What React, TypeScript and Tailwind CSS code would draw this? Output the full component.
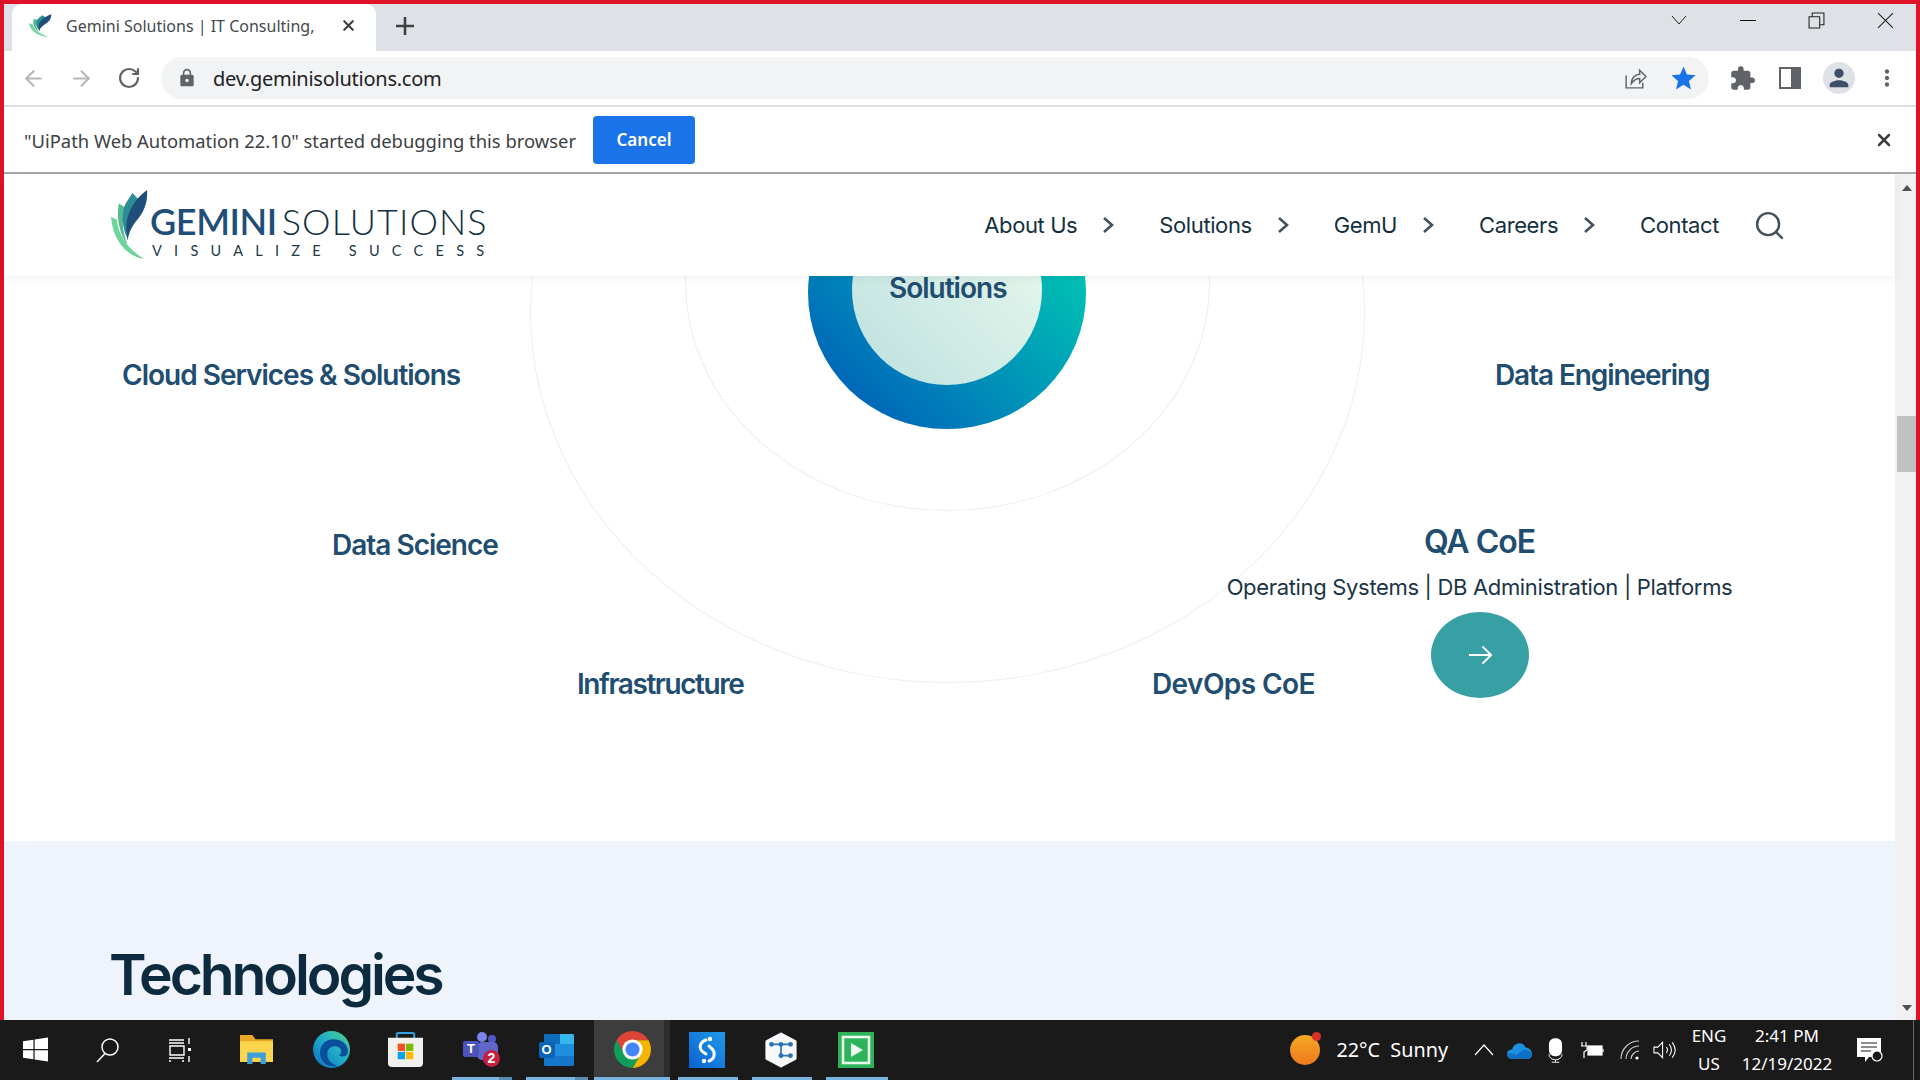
import { ArrowLeft, ArrowRight, RotateCw, Search, X } from "lucide-react";
import { MdExtension, MdLock, MdMoreVert, MdPerson, MdStar } from "react-icons/md";

const siteFont = "font-['Inter',sans-serif]";
const labelClass =
  "absolute whitespace-nowrap font-['Inter',sans-serif] text-[28px] font-semibold text-[#214d70]";

const Feather = ({ className }: { className: string }) => (
  <svg viewBox="0 0 40 70" preserveAspectRatio="none" className={className}>
    <path d="M0 27 L6 30 C8 46 17 58 34 68 C18 66 2 52 0 27Z" fill="#6fd49a" />
    <path d="M8 14 L15 18 C11 28 11 40 17 54 C10 46 5 30 8 14Z" fill="#57b98f" />
    <path d="M22 4 L28 10 C21 17 17 27 16 47 C12 37 10 24 15 14Z" fill="#2b8c96" />
    <path d="M37 1 C38 14 33 24 25 32 C20 38 18 44 17 50 C15 40 15 30 20 20 C24 12 30 6 37 1Z" fill="#1f4e79" />
  </svg>
);

const NavItem = ({ label }: { label: string }) => (
  <div className="flex items-center gap-[25px]">
    <span>{label}</span>
    <svg viewBox="0 0 12 18" className="w-[12px] h-[18px]" fill="none" stroke="#44525e" strokeWidth="2.6">
      <path d="M2 2 L10 9 L2 16" />
    </svg>
  </div>
);

const ChromeLogo = () => (
  <svg viewBox="2 2 44 44" className="w-[37px] h-[37px]">
    <path d="M5 13 A22 22 0 0 1 43 13 H24 A11 11 0 0 0 14.5 29.5Z" fill="#db4437" />
    <path d="M43 13 A22 22 0 0 1 24 46 L33.5 29.5 A11 11 0 0 0 24 13Z" fill="#f4b400" />
    <path d="M24 46 A22 22 0 0 1 5 13 L14.5 29.5 A11 11 0 0 0 33.5 29.5Z" fill="#0f9d58" />
    <circle cx="24" cy="24" r="12" fill="#fff" />
    <circle cx="24" cy="24" r="8.4" fill="#4285f4" />
  </svg>
);

const apps = [
  {
    key: "windows",
    width: "w-[70px]",
    icon: (
      <svg viewBox="0 0 24 24" className="w-[25px] h-[25px]" fill="#fff">
        <path d="M0 4 L10 2.6 V11.4 H0Z M11.2 2.4 L24 0.5 V11.4 H11.2Z M0 12.6 H10 V21.4 L0 20Z M11.2 12.6 H24 V23.5 L11.2 21.6Z" />
      </svg>
    ),
  },
  {
    key: "search",
    width: "w-[74px]",
    icon: (
      <svg viewBox="0 0 26 26" className="w-[26px] h-[26px]" fill="none" stroke="#fff" strokeWidth="1.5">
        <circle cx="16" cy="10" r="8" />
        <path d="M11 16.5 L3 25" />
      </svg>
    ),
  },
  {
    key: "taskview",
    width: "w-[72px]",
    icon: (
      <svg viewBox="0 0 26 26" className="w-[26px] h-[26px]" fill="none" stroke="#fff" strokeWidth="1.4">
        <path d="M2 3 H17 M2 6 H17 M3 9 H17 V18 H3Z M2 21 H17 M2 24 H4 M15 24 H17 M22 1 V7 M22 19 V25" />
        <rect x="21" y="11" width="3" height="3" fill="#fff" stroke="none" />
      </svg>
    ),
  },
  {
    key: "files",
    width: "w-[80px]",
    icon: (
      <svg viewBox="0 0 32 32" className="w-[33px] h-[33px]">
        <path d="M0 2 H12 L15 6 H32 V28 H0Z" fill="#e9a825" />
        <rect x="0" y="8" width="32" height="20" fill="#fbd54e" />
        <path d="M7 30 V19 H25 V30 H20 V24 H12 V30Z" fill="#3f9fdc" />
      </svg>
    ),
  },
  {
    key: "edge",
    width: "w-[70px]",
    icon: (
      <svg viewBox="0 0 36 36" className="w-[37px] h-[37px]">
        <defs>
          <linearGradient id="edgeA" x1="1" y1="0" x2="0" y2="1">
            <stop offset="0" stopColor="#4fd68a" />
            <stop offset="0.5" stopColor="#1fa9c9" />
            <stop offset="1" stopColor="#0c6cc0" />
          </linearGradient>
        </defs>
        <circle cx="18" cy="18" r="18" fill="url(#edgeA)" />
        <path d="M34 20 C34 12 27 8 20 8 C11 8 6 15 7 23 C8 31 16 36 24 34 C17 32 13 27 14 21 C15 16 19 14 23 15 C28 16 29 22 25 24 C31 26 34 24 34 20Z" fill="#0b4f9c" />
      </svg>
    ),
  },
  {
    key: "store",
    width: "w-[78px]",
    icon: (
      <svg viewBox="0 0 36 36" className="w-[35px] h-[35px]">
        <path d="M9 8 V2.5 Q9 1 11 1 H25 Q27 1 27 2.5 V8" fill="none" stroke="#36a3e0" strokeWidth="2" />
        <path d="M0 6 H36 V32 Q36 36 32 36 H4 Q0 36 0 32Z" fill="#f2f0ed" />
        <rect x="10" y="12" width="7.5" height="7.5" fill="#f25022" />
        <rect x="18.5" y="12" width="7.5" height="7.5" fill="#7fba00" />
        <rect x="10" y="20.5" width="7.5" height="7.5" fill="#00a4ef" />
        <rect x="18.5" y="20.5" width="7.5" height="7.5" fill="#ffb900" />
      </svg>
    ),
  },
  {
    key: "teams",
    width: "w-[74px]",
    icon: (
      <div className="relative w-[36px] h-[36px]">
        <div className="absolute left-[14px] top-0 w-[10px] h-[10px] rounded-full bg-[#7b83eb]" />
        <div className="absolute left-[25px] top-[3px] w-[8px] h-[8px] rounded-full bg-[#5059c9]" />
        <div className="absolute left-[14px] top-[10px] w-[21px] h-[18px] rounded-[5px] bg-[#5f68c9]" />
        <div className="absolute left-0 top-[9px] w-[16px] h-[16px] rounded-[2px] bg-[#4b53bc] flex items-center justify-center text-white text-[13px] font-bold font-['Liberation_Sans',sans-serif]">
          T
        </div>
        <div className="absolute left-[20px] top-[18px] w-[17px] h-[17px] rounded-full bg-[#c4213f] flex items-center justify-center text-white text-[14px] font-bold font-['Liberation_Sans',sans-serif]">
          2
        </div>
      </div>
    ),
  },
  {
    key: "outlook",
    width: "w-[76px]",
    icon: (
      <div className="relative w-[35px] h-[32px]">
        <div className="absolute left-[5px] top-0 w-[30px] h-[32px] rounded-[2px] bg-[#1e8fdd]" />
        <div className="absolute left-[5px] top-0 w-[16px] h-[10px] rounded-tl-[2px] bg-[#0f6cbd]" />
        <div className="absolute left-[21px] top-0 w-[14px] h-[10px] rounded-tr-[2px] bg-[#37b5ed]" />
        <div className="absolute left-[5px] top-[22px] w-[30px] h-[10px] rounded-b-[2px] bg-[#1477c9]" />
        <div className="absolute left-0 top-[8px] w-[16px] h-[16px] rounded-[2px] bg-[#0c63b4] flex items-center justify-center text-white text-[13px] font-bold font-['Liberation_Sans',sans-serif]">
          O
        </div>
      </div>
    ),
  },
  { key: "chrome", width: "w-[76px]", icon: <ChromeLogo /> },
  {
    key: "sapp",
    width: "w-[74px]",
    icon: (
      <svg viewBox="0 0 36 36" className="w-[36px] h-[36px]">
        <defs>
          <linearGradient id="sappBg" x1="0" y1="1" x2="1" y2="0">
            <stop offset="0" stopColor="#0a62cf" />
            <stop offset="1" stopColor="#1f9ae8" />
          </linearGradient>
        </defs>
        <rect width="36" height="36" fill="url(#sappBg)" />
        <path d="M17 8 C11 10 9 16 14 20 L17 22" fill="none" stroke="#fff" strokeWidth="3" strokeLinecap="round" />
        <path d="M20 14 L22 16 C27 20 26 27 20 29" fill="none" stroke="#fff" strokeWidth="3" strokeLinecap="round" />
        <circle cx="21" cy="7" r="2.2" fill="#fff" />
        <circle cx="15" cy="29" r="2.2" fill="#fff" />
      </svg>
    ),
  },
  {
    key: "hex",
    width: "w-[74px]",
    icon: (
      <svg viewBox="0 0 36 38" className="w-[34px] h-[36px]">
        <path d="M18 2 L33 10 V28 L18 36 L3 28 V10Z" fill="#f6f8fb" stroke="#f6f8fb" strokeWidth="3" strokeLinejoin="round" />
        <path d="M8 13 H28 M18 13 V25 M18 25 H28" stroke="#2a74b5" strokeWidth="1.8" fill="none" />
        <circle cx="8" cy="13" r="2.6" fill="#2a74b5" />
        <circle cx="18" cy="13" r="2.6" fill="#2a74b5" />
        <circle cx="28" cy="13" r="2.6" fill="#2a74b5" />
        <circle cx="18" cy="25" r="2.6" fill="#2a74b5" />
        <circle cx="28" cy="25" r="2.6" fill="#2a74b5" />
      </svg>
    ),
  },
  {
    key: "player",
    width: "w-[76px]",
    icon: (
      <svg viewBox="0 0 36 36" className="w-[36px] h-[36px]">
        <rect width="36" height="36" fill="#2db35a" />
        <rect x="5" y="5" width="26" height="26" fill="#2db35a" stroke="#eaf8ee" strokeWidth="2.6" />
        <path d="M13 11 L25 18 L13 25Z" fill="#eaf8ee" />
      </svg>
    ),
  },
];

const underlined = ["teams", "outlook", "sapp", "hex", "player"];
const stacked = ["teams", "outlook"];

export default function App() {
  return (
    <div className="w-[1920px] h-[1080px] flex flex-col overflow-hidden bg-[#df1227] font-['Noto_Sans',sans-serif]">
      <div className="flex-1 min-h-0 flex flex-col pt-[4px] px-[4px]">
        {/* tab strip */}
        <div className="h-[47px] shrink-0 bg-[#dee1e6] flex items-end pl-[8px]">
          <div className="w-[364px] h-[47px] bg-white rounded-t-[10px] flex items-center pl-[17px] pb-[4px]">
            <Feather className="w-[24px] h-[24px]" />
            <span className="ml-[13px] w-[257px] overflow-hidden whitespace-nowrap text-[16px] text-[#45494d]">
              Gemini Solutions | IT Consulting,
            </span>
            <X className="ml-[17px] w-[17px] h-[17px] text-[#3c4043]" strokeWidth={3} />
          </div>
          <svg viewBox="0 0 20 20" className="ml-[19px] mb-[15px] w-[20px] h-[20px]" stroke="#3c4043" strokeWidth="2.6">
            <path d="M10 1 V19 M1 10 H19" />
          </svg>
          <div className="flex-1" />
          <div className="flex items-center h-[32px] self-start gap-[50px] pr-[22px]">
            <svg viewBox="0 0 16 10" className="w-[16px] h-[10px] mr-[1px]" fill="none" stroke="#222" strokeWidth="1">
              <path d="M1 1 L8 9 L15 1" />
            </svg>
            <div className="w-[16px] h-[1px] bg-[#111] ml-[2px]" />
            <svg viewBox="0 0 16 16" className="w-[17px] h-[17px] ml-[2px]" fill="none" stroke="#222" strokeWidth="1">
              <path d="M1 4.5 H11 V15 H1Z M4 4.5 V1 H15 V12 H11" />
            </svg>
            <svg viewBox="0 0 16 16" className="w-[17px] h-[17px] ml-[2px]" fill="none" stroke="#222" strokeWidth="1">
              <path d="M1 1 L15 15 M15 1 L1 15" />
            </svg>
          </div>
        </div>

        {/* toolbar */}
        <div className="h-[56px] shrink-0 bg-white border-b-[2px] border-[#dedfe1] flex items-center pl-[17px]">
          <ArrowLeft className="w-[25px] h-[25px] text-[#b4b7bb]" strokeWidth={2} />
          <ArrowRight className="ml-[23px] w-[25px] h-[25px] text-[#b4b7bb]" strokeWidth={2} />
          <RotateCw className="ml-[23px] w-[24px] h-[24px] text-[#5f6368]" strokeWidth={2.2} />
          <div className="ml-[20px] w-[1548px] h-[42px] rounded-full bg-[#f1f3f4] flex items-center pl-[16px] pr-[11px]">
            <MdLock className="w-[20px] h-[20px] text-[#5f6368]" />
            <span className="ml-[16px] mt-[1px] text-[20px] text-[#202124] tracking-[-0.25px]">dev.geminisolutions.com</span>
            <div className="flex-1" />
            <svg viewBox="0 0 24 24" className="w-[25px] h-[25px]" fill="none" stroke="#5f6368" strokeWidth="1.4">
              <path d="M3 9 V21 H19 V16 M8 17 C8 11 12 8 16 8 V4 L22 10 L16 16 V12 C12 12 10 14 8 17Z" />
            </svg>
            <MdStar className="ml-[21px] w-[29px] h-[29px] text-[#1a73e8]" />
          </div>
          <MdExtension className="ml-[20px] w-[27px] h-[27px] text-[#5f6368]" />
          <svg viewBox="0 0 22 22" className="ml-[23px] w-[22px] h-[22px]">
            <path d="M1 1 H21 V21 H1Z" fill="none" stroke="#5f6368" strokeWidth="2" />
            <rect x="12" y="1" width="9" height="20" fill="#5f6368" />
          </svg>
          <div className="ml-[22px] w-[32px] h-[32px] rounded-full bg-[#dee1e6] flex items-center justify-center">
            <MdPerson className="w-[28px] h-[28px] text-[#3c4f66]" />
          </div>
          <MdMoreVert className="ml-[19px] w-[26px] h-[26px] text-[#5f6368]" />
        </div>

        {/* debugging infobar */}
        <div className="h-[67px] shrink-0 bg-white border-b-[2px] border-[#a8a8a8] flex items-center pl-[20px] pr-[22px]">
          <span className="mt-[2px] text-[18.4px] text-[#3c4043]">"UiPath Web Automation 22.10" started debugging this browser</span>
          <button className="ml-[17px] w-[102px] h-[48px] rounded-[4px] bg-[#1a73e8] text-white text-[17px] font-semibold">
            Cancel
          </button>
          <div className="flex-1" />
          <X className="w-[20px] h-[20px] text-[#3c4043]" strokeWidth={3} />
        </div>

        {/* page and scrollbar */}
        <div className="flex-1 min-h-0 flex">
          <div className={`flex-1 min-w-0 flex flex-col bg-white ${siteFont}`}>
            <header className="relative z-10 h-[102px] shrink-0 bg-white shadow-[0_2px_8px_rgba(0,0,0,0.06)] flex items-center pl-[107px] pr-[109px]">
              <Feather className="w-[39px] h-[72px]" />
              <div className="mt-[11px] flex flex-col font-['Lato',sans-serif]">
                <div className="flex gap-[5px] text-[36px] leading-[36px] tracking-[-0.4px]">
                  <span className="font-semibold text-[#1f4e79]">GEMINI</span>
                  <span className="font-light tracking-[1.1px] text-[#14303f]">SOLUTIONS</span>
                </div>
                <div className="ml-[2px] mt-[4px] text-[14.5px] leading-[16px] tracking-[12.25px] whitespace-nowrap text-[#21394a]">
                  VISUALIZE SUCCESS
                </div>
              </div>
              <div className="flex-1" />
              <nav className="flex items-center gap-[45px] text-[22px] tracking-[-0.4px] text-[#14303f]">
                <NavItem label="About Us" />
                <NavItem label="Solutions" />
                <NavItem label="GemU" />
                <NavItem label="Careers" />
                <span>Contact</span>
                <Search className="-ml-[11px] w-[33px] h-[33px] text-[#44525e]" strokeWidth={1.8} />
              </nav>
            </header>

            {/* diagram */}
            <div className="relative h-[565px] shrink-0 overflow-hidden bg-white">
              <div className="absolute left-[526px] top-[-335px] w-[835px] h-[742px] rounded-[50%] border border-[#eeeeee]" />
              <div className="absolute left-[681px] top-[-223px] w-[525px] h-[458px] rounded-[50%] border border-[#eeeeee]" />
              <div className="absolute left-[804px] top-[-119px] w-[278px] h-[272px] rounded-[50%] bg-gradient-to-tr from-[#0050b8] to-[#00e0aa]" />
              <div className="absolute left-[848px] top-[-81px] w-[190px] h-[190px] rounded-full bg-gradient-to-tr from-[#bce0df] to-[#ecfbee]" />
              <div className={`${labelClass} left-[885px] top-0 leading-[24px] tracking-[-1px]`}>Solutions</div>
              <div className={`${labelClass} left-[118px] top-[81px] leading-[36px] tracking-[-1px]`}>Cloud Services &amp; Solutions</div>
              <div className={`${labelClass} left-[1491px] top-[81px] leading-[36px] tracking-[-1.1px]`}>Data Engineering</div>
              <div className={`${labelClass} left-[328px] top-[251px] leading-[36px] tracking-[-1px]`}>Data Science</div>
              <div className={`${labelClass} left-[573px] top-[390px] leading-[36px] tracking-[-1.45px]`}>Infrastructure</div>
              <div className={`${labelClass} left-[1148px] top-[390px] leading-[36px] tracking-[-0.6px]`}>DevOps CoE</div>
              <div className="absolute left-[1216px] top-[244px] w-[519px] flex flex-col items-center">
                <div className="text-[32px] leading-[44px] font-semibold tracking-[-1px] text-[#214d70]">QA CoE</div>
                <div className="mt-[5px] text-[22px] leading-[36px] tracking-[-0.33px] text-[#1a3445] whitespace-nowrap">
                  Operating Systems | DB Administration | Platforms
                </div>
                <button className="mt-[7px] w-[98px] h-[86px] rounded-[50%] bg-[#36a0a5] flex items-center justify-center">
                  <svg viewBox="0 0 25 20" className="w-[24px] h-[20px]" fill="none" stroke="#fff" strokeWidth="2">
                    <path d="M1 10 H24 M15 1 L24 10 L15 19" />
                  </svg>
                </button>
              </div>
            </div>

            <section className="flex-1 min-h-0 bg-[#eff3fb] px-[105px] pt-[99px]">
              <h2 className="text-[57px] leading-[70px] font-semibold tracking-[-3.1px] text-[#0d2b3e]">Technologies</h2>
            </section>
          </div>

          {/* scrollbar */}
          <div className="w-[21px] shrink-0 bg-[#f1f1f1] flex flex-col items-end">
            <div className="w-[19px] h-[20px] mt-[4px] flex items-center justify-center">
              <div className="w-0 h-0 border-x-[5px] border-x-transparent border-b-[6px] border-b-[#505050]" />
            </div>
            <div className="mt-[218px] w-[19px] h-[56px] bg-[#c1c1c1]" />
            <div className="flex-1" />
            <div className="w-[19px] h-[20px] mb-[2px] flex items-center justify-center">
              <div className="w-0 h-0 border-x-[5px] border-x-transparent border-t-[6px] border-t-[#505050]" />
            </div>
          </div>
        </div>
      </div>

      {/* taskbar */}
      <div className="h-[60px] shrink-0 bg-[#1a1a1a] flex items-stretch text-white">
        <div className="flex shrink-0">
          {apps.map((app) => (
            <div
              key={app.key}
              className={`relative ${app.width} flex items-center justify-center pb-[1px] ${
                app.key === "chrome" ? "bg-[#3d3d3d] border-r-[6px] border-[#2d2d2d] pl-[6px]" : ""
              }`}
            >
              {app.icon}
              {underlined.includes(app.key) && (
                <div className="absolute bottom-0 left-[8px] right-[6px] h-[3px] bg-[#78b4e0]" />
              )}
              {stacked.includes(app.key) && (
                <div className="absolute bottom-0 right-[6px] w-[13px] h-[3px] bg-[#5d8bad]" />
              )}
              {app.key === "chrome" && <div className="absolute bottom-0 left-0 right-[-6px] h-[3px] bg-[#78b4e0]" />}
            </div>
          ))}
        </div>
        <div className="flex-1" />
        <div className="flex items-center">
          <div className="relative w-[30px] h-[30px] rounded-full bg-gradient-to-b from-[#f5a623] to-[#ee7a1f]">
            <div className="absolute right-[-1px] top-[-3px] w-[9px] h-[9px] rounded-full bg-[#d9322b]" />
          </div>
          <span className="ml-[16px] text-[19.8px] whitespace-nowrap">22°C&nbsp; Sunny</span>
          <svg viewBox="0 0 20 12" className="ml-[26px] w-[20px] h-[12px]" fill="none" stroke="#fff" strokeWidth="1.2">
            <path d="M1 11 L10 1 L19 11" />
          </svg>
          <svg viewBox="0 0 24 16" className="ml-[13px] w-[25px] h-[17px]">
            <path d="M5 16 C1 16 0 13 0 11 C0 8 3 7 5 7 C6 3 9 1 12 1 C15 1 17 3 18 5 C21 5 24 8 24 11 C24 14 22 16 20 16Z" fill="#1b8fe0" />
            <path d="M5 16 C1 16 0 13 0 11 C3 10 6 11 9 12 L15 8 C18 7 22 8 24 11 C24 14 22 16 20 16Z" fill="#0f6fc4" />
          </svg>
          <svg viewBox="0 0 16 26" className="ml-[16px] w-[15px] h-[25px]" fill="#fff">
            <rect x="1" y="0" width="14" height="19" rx="6" />
            <path d="M1 17 A7 6 0 0 0 15 17 M8 23 V25 M4 25.5 H12" fill="none" stroke="#fff" strokeWidth="1" />
          </svg>
          <svg viewBox="0 0 24 18" className="ml-[17px] w-[24px] h-[18px]" fill="none" stroke="#fff" strokeWidth="1.2">
            <rect x="8" y="5" width="14" height="9" fill="#fff" />
            <path d="M23 8 V11 M2 1 V5 M6 1 V5 M1 5 H7 V9 L4 11 V17" />
          </svg>
          <svg viewBox="0 0 20 20" className="ml-[16px] w-[20px] h-[20px]" fill="none" stroke="#cfcfcf" strokeWidth="1.1">
            <path d="M1 19 C1 9 9 1 19 1 M6 19 C6 12 12 6 19 6 M11 19 C11 15 15 11 19 11" />
            <circle cx="17" cy="18" r="1.6" fill="#fff" stroke="none" />
          </svg>
          <svg viewBox="0 0 24 20" className="ml-[13px] w-[23px] h-[20px]" fill="none" stroke="#fff" strokeWidth="1.1">
            <path d="M1 7 H5 L10 2 V18 L5 13 H1Z M14 7 C15.5 9 15.5 11 14 13 M17 4 C20 8 20 12 17 16 M20 2 C24 7 24 13 20 18" />
          </svg>
          <div className="ml-[15px] w-[36px] flex flex-col items-center text-[17px] leading-[28px]">
            <span>ENG</span>
            <span>US</span>
          </div>
          <div className="ml-[12px] w-[96px] flex flex-col items-center text-[17px] leading-[28px] whitespace-nowrap">
            <span>2:41 PM</span>
            <span>12/19/2022</span>
          </div>
          <svg viewBox="0 0 26 26" className="ml-[22px] w-[26px] h-[26px]">
            <path d="M0 1 H24 V20 H12 L8 25 V20 H0Z" fill="#fff" />
            <path d="M4 6 H20 M4 10 H20 M4 14 H14" stroke="#1a1a1a" strokeWidth="1.2" />
            <circle cx="20" cy="19" r="5" fill="#1a1a1a" stroke="#fff" strokeWidth="1.2" />
          </svg>
          <div className="ml-[30px] w-[1px] h-[60px] bg-[#666]" />
          <div className="w-[6px]" />
        </div>
      </div>
    </div>
  );
}
